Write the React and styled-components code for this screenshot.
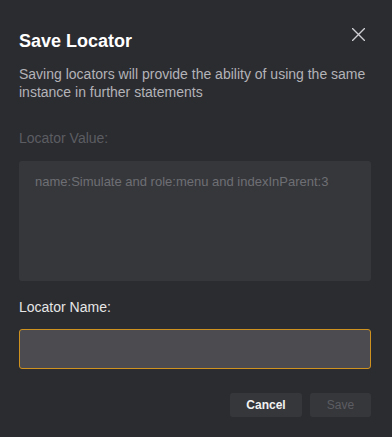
import React from "react";
import styled, { createGlobalStyle } from "styled-components";

const Global = createGlobalStyle`
  html, body { margin: 0; padding: 0; background: #2b2c30; }
  body { font-family: "Liberation Sans", Arial, sans-serif; }
  * { box-sizing: border-box; }
`;

const Dialog = styled.div`
  width: 392px;
  height: 437px;
  background: #2b2c30;
  padding: 29px 21px 0 19px;
  display: flex;
  flex-direction: column;
`;

const Header = styled.div`
  display: flex;
  justify-content: space-between;
  align-items: flex-start;
`;

const Title = styled.h2`
  margin: 0;
  font-size: 18px;
  line-height: 24px;
  font-weight: 700;
  color: #ffffff;
`;

const CloseButton = styled.button`
  background: none;
  border: none;
  padding: 0;
  margin: -2px 6px 0 0;
  width: 14px;
  height: 14px;
  display: flex;
  align-items: center;
  justify-content: center;
  cursor: pointer;
`;

const Description = styled.p`
  margin: 12px 0 0;
  font-size: 14px;
  line-height: 18px;
  color: #b3b3b8;
  padding-right: 2px;
`;

const Label = styled.div`
  font-size: 14px;
  line-height: 18px;
  margin-top: ${(p) => p.$mt}px;
  color: ${(p) => (p.$dim ? "#5c5d62" : "#e6e6e6")};
`;

const ValueBox = styled.div`
  margin-top: ${(p) => p.$mt}px;
  height: 120px;
  background: #36373b;
  border-radius: 3px;
  padding: 12px 16px;
  font-size: 13px;
  line-height: 17px;
  color: #6e6f74;
`;

const NameInput = styled.input`
  margin-top: 13px;
  height: 40px;
  width: 100%;
  background: #4c4b50;
  border: 1px solid #d0921f;
  border-radius: 3px;
  outline: none;
  padding: 0 12px;
  color: #fff;
  font-family: inherit;
  font-size: 14px;
`;

const Footer = styled.div`
  margin-top: 24px;
  display: flex;
  justify-content: flex-end;
  gap: 8px;
`;

const Button = styled.button`
  height: 24px;
  width: ${(p) => p.$w}px;
  border: none;
  border-radius: 3px;
  background: #36373b;
  font-family: inherit;
  font-size: 12px;
  font-weight: ${(p) => (p.$disabled ? 400 : 700)};
  color: ${(p) => (p.$disabled ? "#5c5d62" : "#f2f2f2")};
  padding: 0;
  cursor: ${(p) => (p.$disabled ? "default" : "pointer")};
`;

export default function App() {
  return (
    <>
      <Global />
      <Dialog>
        <Header>
          <Title>Save Locator</Title>
          <CloseButton aria-label="Close">
            <svg width="13" height="13" viewBox="0 0 13 13">
              <path d="M0.5 0.5 L12.5 12.5 M12.5 0.5 L0.5 12.5" stroke="#d0d0d4" strokeWidth="1.4" strokeLinecap="round" />
            </svg>
          </CloseButton>
        </Header>
        <Description>
          Saving locators will provide the ability of using the same instance in further statements
        </Description>
        <Label $dim $mt={28}>Locator Value:</Label>
        <ValueBox $mt={14}>name:Simulate and role:menu and indexInParent:3</ValueBox>
        <Label $mt={17}>Locator Name:</Label>
        <NameInput />
        <Footer>
          <Button $w={72}>Cancel</Button>
          <Button $w={61} $disabled>Save</Button>
        </Footer>
      </Dialog>
    </>
  );
}
